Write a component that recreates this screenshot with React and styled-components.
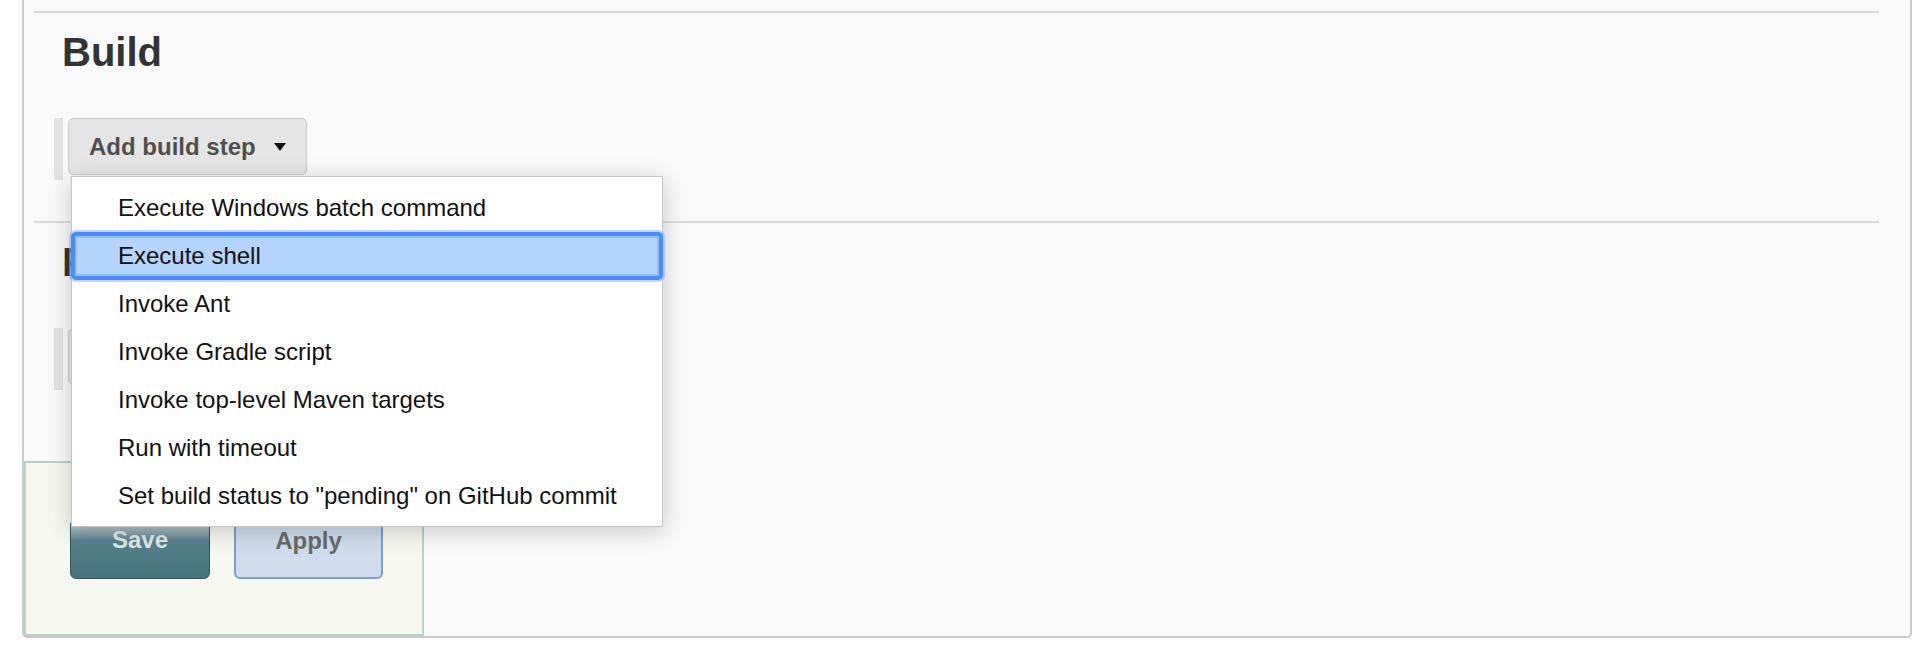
import React from 'react'
import styled, { createGlobalStyle } from 'styled-components'

const GlobalStyle = createGlobalStyle`
  body {
    margin: 0;
    background: #fff;
    font-family: 'Liberation Sans', Arial, sans-serif;
  }
`

const Panel = styled.div`
  margin-left: 22px;
  width: 1890px;
  box-sizing: border-box;
  background: #f9f9f9;
  border: 2px solid #cbcbcb;
  border-top: none;
  border-radius: 0 0 5px 5px;
  display: flex;
  flex-direction: column;
`
const Divider = styled.div`
  height: 2px;
  background: #dadada;
  margin: ${props => props.$top}px 31px 0 10px;
`
const Title = styled.h2`
  margin: 15px 0 0 38px;
  font-weight: 700;
  font-size: 40px;
  line-height: 48px;
  color: #333;
`
const StepRow = styled.div`
  position: relative;
  display: flex;
  align-items: flex-start;
  margin: 42px 0 0 30px;
`
const Grip = styled.div`
  width: 9px;
  height: 62px;
  background: #e2e2e2;
`
const DropButton = styled.button`
  margin-left: 5px;
  height: 57px;
  box-sizing: border-box;
  padding: 0 20px;
  display: flex;
  align-items: center;
  gap: 18px;
  border: 1px solid #cdcdcd;
  border-radius: 5px;
  background: #e5e5e5;
  font-family: 'Liberation Sans', Arial, sans-serif;
  font-weight: 700;
  font-size: 24px;
  color: #4f4f4f;
  cursor: pointer;
`
const Caret = styled.span`
  width: 0;
  height: 0;
  border-left: 6.5px solid transparent;
  border-right: 6.5px solid transparent;
  border-top: 8px solid #111;
`
const Menu = styled.ul`
  position: absolute;
  left: 17px;
  top: 58px;
  z-index: 10;
  width: 592px;
  box-sizing: border-box;
  margin: 0;
  padding: 7px 0 6px;
  list-style: none;
  background: #fff;
  border: 1px solid #c6c6c6;
  box-shadow: 0 4px 22px rgba(0, 0, 0, 0.2);
`
const MenuItem = styled.li`
  height: 48px;
  box-sizing: border-box;
  line-height: ${props => (props.$selected ? '40px' : '48px')};
  padding-left: ${props => (props.$selected ? '43px' : '46px')};
  margin: ${props => (props.$selected ? '0 -1px' : '0')};
  font-size: 24px;
  color: #111;
  white-space: nowrap;
  ${props =>
    props.$selected &&
    `
    background: #b4d4fc;
    border: 4px solid #4a8ef5;
    border-radius: 5px;
    box-shadow: 0 0 0 2px rgba(130, 177, 245, 0.55), inset 0 0 0 2px #93bdf7;
  `}
`
const Footer = styled.div`
  margin-top: 71px;
  width: 400px;
  box-sizing: border-box;
  padding: 56px 0 55px 44px;
  display: flex;
  gap: 24px;
  background: #f6f7ef;
  border: 2px solid #b7d3c5;
`
const SaveButton = styled.button`
  width: 140px;
  height: 60px;
  box-sizing: border-box;
  padding: 0 0 18px;
  line-height: 40px;
  border: 1px solid #2f5664;
  border-radius: 6px;
  background: linear-gradient(to bottom, #d6dee0 0%, #a9bcc1 14%, #56818d 36%, #46737f 100%);
  font-family: 'Liberation Sans', Arial, sans-serif;
  font-weight: 700;
  font-size: 24px;
  color: #dfe7e9;
`
const ApplyButton = styled.button`
  width: 149px;
  height: 60px;
  box-sizing: border-box;
  padding: 0 0 18px;
  line-height: 40px;
  border: 2px solid #78a1d5;
  border-radius: 6px;
  background: #cedced;
  font-family: 'Liberation Sans', Arial, sans-serif;
  font-weight: 700;
  font-size: 24px;
  color: #6a6a6a;
`

const steps = [
  'Execute Windows batch command',
  'Execute shell',
  'Invoke Ant',
  'Invoke Gradle script',
  'Invoke top-level Maven targets',
  'Run with timeout',
  'Set build status to "pending" on GitHub commit',
]

const App = () => {
  return (
    <>
      <GlobalStyle />
      <Panel>
        <Divider $top={11} />
        <Title>Build</Title>
        <StepRow>
          <Grip />
          <DropButton>
            Add build step
            <Caret />
          </DropButton>
          <Menu>
            {steps.map(step => (
              <MenuItem key={step} $selected={step === 'Execute shell'}>
                {step}
              </MenuItem>
            ))}
          </Menu>
        </StepRow>
        <Divider $top={41} />
        <Title>Post-build Actions</Title>
        <StepRow>
          <Grip />
          <DropButton>
            Add post-build action
            <Caret />
          </DropButton>
        </StepRow>
        <Footer>
          <SaveButton>Save</SaveButton>
          <ApplyButton>Apply</ApplyButton>
        </Footer>
      </Panel>
    </>
  )
}

export default App
